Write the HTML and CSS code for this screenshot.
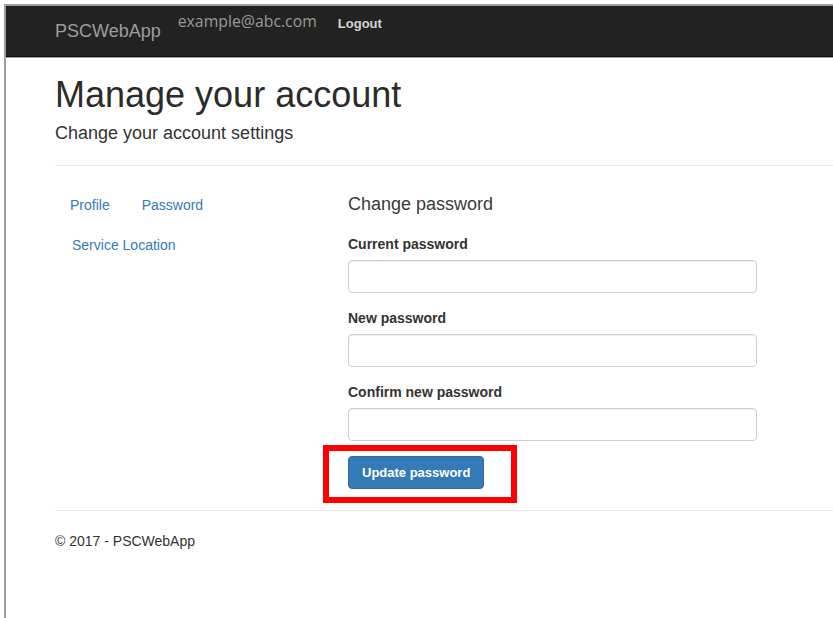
FILE: index.html
```html
<!DOCTYPE html>
<html lang="en">
<head>
<meta charset="utf-8">
<title>Manage your account - PSCWebApp</title>
<link rel="stylesheet" href="styles.css">
</head>
<body>
<div class="window">
  <header class="navbar">
    <a class="brand" href="#">PSCWebApp</a>
    <span class="user-email">example@abc.com</span>
    <a class="logout" href="#">Logout</a>
  </header>

  <main class="body-content">
    <h1 class="title">Manage your account</h1>
    <p class="subtitle">Change your account settings</p>
    <hr class="rule">

    <div class="row">
      <nav class="side-col">
        <ul class="pills">
          <li><a href="#">Profile</a></li>
          <li><a href="#">Password</a></li>
          <li><a href="#">Service Location</a></li>
        </ul>
      </nav>

      <section class="main-col">
        <h4 class="form-title">Change password</h4>
        <form class="pw-form">
          <div class="form-group">
            <label for="cur">Current password</label>
            <input id="cur" type="password" class="form-control">
          </div>
          <div class="form-group">
            <label for="new">New password</label>
            <input id="new" type="password" class="form-control">
          </div>
          <div class="form-group">
            <label for="confirm">Confirm new password</label>
            <input id="confirm" type="password" class="form-control">
          </div>
          <div class="actions">
            <button type="button" class="btn-primary">Update password</button>
            <span class="callout"></span>
          </div>
        </form>
      </section>
    </div>

    <hr class="rule rule-footer">
    <footer class="footer">
      <p>&copy; 2017 - PSCWebApp</p>
    </footer>
  </main>
</div>
</body>
</html>
```

FILE: styles.css
```css
* {
  box-sizing: border-box;
}

html, body {
  margin: 0;
  padding: 0;
  background: #fff;
}

body {
  font-family: "Liberation Sans", Arial, sans-serif;
  font-size: 14px;
  line-height: 20px;
  color: #333;
  overflow: hidden;
}

a {
  text-decoration: none;
}

/* browser window frame */
.window {
  margin: 4px 0 0 4px;
  border-top: 2px solid #9e9e9e;
  border-left: 2px solid #9e9e9e;
  height: calc(100vh - 4px);
}

/* top navigation bar */
.navbar {
  display: flex;
  align-items: flex-start;
  height: 51px;
  background: #222;
  border-bottom: 1px solid #0c0c0c;
  box-shadow: 0 1px 0 #a5a5a5;
  padding-left: 49px;
}

.brand {
  font-size: 18px;
  line-height: 20px;
  color: #9d9d9d;
  padding-top: 15px;
}

.user-email {
  font-family: "Open Sans", "Liberation Sans", sans-serif;
  font-size: 15.8px;
  line-height: 20px;
  color: #9a9a9a;
  margin-left: 17px;
  padding-top: 5px;
}

.logout {
  font-size: 13px;
  font-weight: bold;
  line-height: 20px;
  color: #d4d4d4;
  margin-left: 21px;
  padding-top: 8px;
}

/* page body */
.body-content {
  padding-left: 49px;
  padding-top: 18px;
}

.title {
  margin: 0;
  font-size: 36px;
  line-height: 39.6px;
  font-weight: normal;
  color: #2b2b2b;
}

.subtitle {
  margin: 8px 0 0;
  font-size: 18px;
  line-height: 20px;
  color: #333;
}

.rule {
  border: 0;
  border-top: 1px solid #e8e8e8;
  margin: 22px 0 19px;
  height: 0;
}

.row {
  display: flex;
}

.side-col {
  width: 293px;
  flex: none;
}

.pills {
  list-style: none;
  margin: 0;
  padding: 0;
  display: flex;
  flex-wrap: wrap;
}

.pills li {
  margin-left: 2px;
}

.pills li:first-child {
  margin-left: 0;
}

.pills a {
  display: block;
  padding: 10px 15px;
  color: #337ab7;
  line-height: 20px;
}

.main-col {
  flex: none;
}

.form-title {
  margin: 9px 0 20px;
  font-size: 18px;
  line-height: 20px;
  font-weight: normal;
  color: #3a3a3a;
}

.pw-form {
  margin: 0;
}

.form-group {
  margin-bottom: 15px;
}

.form-group label {
  display: block;
  font-weight: bold;
  line-height: 20px;
  margin-bottom: 6px;
}

.form-control {
  display: block;
  width: 409px;
  height: 33px;
  padding: 6px 12px;
  border: 1px solid #cfcfcf;
  border-radius: 4px;
  box-shadow: inset 0 1px 1px rgba(0, 0, 0, 0.075);
  background: #fff;
  font: inherit;
}

.actions {
  position: relative;
  display: inline-block;
}

.btn-primary {
  display: block;
  height: 33px;
  padding: 0 13px;
  border: 1px solid #2e6da4;
  border-radius: 4px;
  background: #337ab7;
  color: #fff;
  font-family: "Liberation Sans", Arial, sans-serif;
  font-size: 13px;
  font-weight: bold;
  line-height: 31px;
}

/* red highlight frame drawn over the submit button */
.callout {
  position: absolute;
  left: -25px;
  top: -11px;
  width: 194px;
  height: 58px;
  border: 6px solid #ff0000;
}

.rule-footer {
  margin: 21px 0 20px;
}

.footer p {
  margin: 0;
  font-size: 14px;
  line-height: 20px;
  color: #333;
}
```
